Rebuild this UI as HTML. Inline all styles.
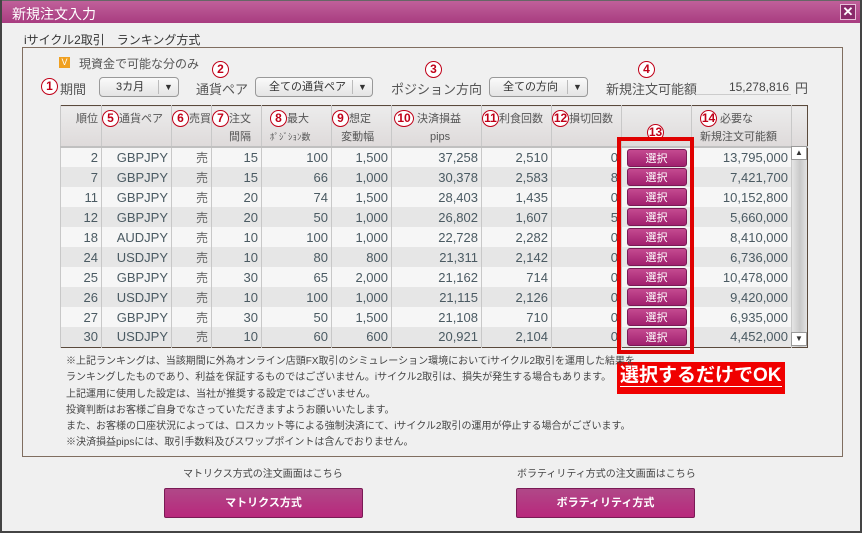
<!DOCTYPE html>
<html><head><meta charset="utf-8"><style>
*{box-sizing:border-box;margin:0;padding:0}
body{width:862px;height:533px;overflow:hidden;background:#f0f0f0;font-family:"Liberation Sans","Noto Sans CJK JP",sans-serif;color:#333;position:relative}
.a{position:absolute;white-space:nowrap}
.win{position:absolute;left:0;top:0;width:862px;height:533px;border:2px solid #444;border-top:none}
.title{position:absolute;left:0;top:0;width:862px;height:23px;background:linear-gradient(#c0609a,#a83c80);border-top:1px solid #666;color:#fff;font-size:14px;padding:3px 12px}
.close{position:absolute;right:6px;top:3px;width:16px;height:16px;border:1px solid #e8c0d8;background:#8a2a6a;color:#fff;font-size:13px;font-weight:bold;text-align:center;line-height:14px}
.panel{position:absolute;left:22px;top:47px;width:821px;height:410px;border:1px solid #806e60}
.c{display:inline-block;width:17px;height:17px;border:1.5px solid #c00018;border-radius:50%;color:#c00018;font-weight:bold;font-size:12px;text-align:center;line-height:14px;background:#fff}
.dd{position:absolute;height:20px;border:1px solid #999;border-radius:4px;background:linear-gradient(#fafafa,#e4e4e4);font-size:11px;color:#333;line-height:18px}
.dd span{position:absolute;right:0;top:2px;width:20px;height:14px;border-left:1px solid #bbb;text-align:center;font-size:9px;line-height:14px}
.lbl{font-size:13px;color:#555}
table{position:absolute;left:60px;top:105px;border-collapse:collapse;border:1px solid #5a4a3c;font-size:13px}
td{border-left:1px solid #c8c8c8;height:20px;text-align:right;padding-right:3px;color:#4a5a62}
td:nth-child(3){font-size:12px;color:#666}
th{height:41px;background:linear-gradient(#ececec,#dedada);border-left:1px solid #c8c8c8;border-bottom:2px solid #c0c0c0;font-weight:normal;font-size:11px;color:#555;vertical-align:top;text-align:left;padding-top:4px;line-height:18px}
tr.o td{background:#f6f6f6}tr.e td{background:#e6e6e6}
.sel{display:inline-block;width:60px;height:18px;border-radius:3px;background:linear-gradient(#c44a90,#a0206e);color:#fff;font-size:11px;text-align:center;line-height:18px;border:1px solid #7a1a55}
.btn{position:absolute;height:30px;border:1px solid #7a1a55;border-radius:2px;background:linear-gradient(#b04888,#b8287c);color:#fff;font-size:11px;font-weight:bold;text-align:center;line-height:29px}
.note{font-size:10px;color:#444;left:66px}
</style></head><body>
<div class="title">新規注文入力<div class="close">✕</div></div>
<div class="win"></div>
<div class="a" style="left:24px;top:31px;font-size:12px;color:#333">iサイクル2取引　ランキング方式</div>
<div class="panel"></div>
<div class="a" style="left:59px;top:57px;width:11px;height:11px;background:#f0a020;color:#fff;font-size:9px;text-align:center;line-height:11px">V</div>
<div class="a lbl" style="left:79px;top:55px;font-size:12px">現資金で可能な分のみ</div>
<div class="a" style="left:41px;top:77px"><span class="c">1</span></div>
<div class="a lbl" style="left:60px;top:79px">期間</div>
<div class="dd" style="left:99px;top:77px;width:80px"><div style="position:absolute;left:16px;top:0">3カ月</div><span>▼</span></div>
<div class="a" style="left:212px;top:60px"><span class="c">2</span></div>
<div class="a lbl" style="left:196px;top:79px">通貨ペア</div>
<div class="dd" style="left:255px;top:77px;width:118px"><div style="position:absolute;left:13px;top:0">全ての通貨ペア</div><span>▼</span></div>
<div class="a" style="left:425px;top:60px"><span class="c">3</span></div>
<div class="a lbl" style="left:391px;top:79px">ポジション方向</div>
<div class="dd" style="left:489px;top:77px;width:99px"><div style="position:absolute;left:13px;top:0">全ての方向</div><span>▼</span></div>
<div class="a" style="left:638px;top:60px"><span class="c">4</span></div>
<div class="a lbl" style="left:606px;top:79px">新規注文可能額</div>
<div class="a" style="left:696px;top:80px;width:95px;border-bottom:1px solid #ccc;font-size:12px;text-align:right;color:#444;padding-right:2px">15,278,816</div>
<div class="a lbl" style="left:795px;top:78px">円</div>
<table>
<tr><th style="width:41px;text-align:right;padding-right:3px">順位</th><th style="width:70px"><span class="c">5</span>通貨ペア</th><th style="width:40px"><span class="c">6</span>売買</th><th style="width:50px;text-align:right;padding-right:10px"><span class="c" style="float:left">7</span>注文<br>間隔</th><th style="width:70px;padding-left:8px"><span class="c">8</span>最大<br><span style="font-size:9px">ﾎﾟｼﾞｼｮﾝ数</span></th><th style="width:60px"><span class="c">9</span>想定<br>&nbsp;&nbsp;&nbsp;変動幅</th><th style="width:90px;padding-left:2px"><span class="c" style="width:20px">10</span> 決済損益<br><span style="padding-left:36px">pips</span></th><th style="width:70px"><span class="c">11</span>利食回数</th><th style="width:70px"><span class="c">12</span>損切回数</th><th style="width:70px"></th><th style="width:100px;padding-left:8px"><span class="c">14</span> 必要な<br>新規注文可能額</th><th style="width:16px"></th></tr>
<tr class="o"><td>2</td><td>GBPJPY</td><td>売</td><td>15</td><td>100</td><td>1,500</td><td>37,258</td><td>2,510</td><td>0</td><td style="text-align:center;padding:0"><span class="sel">選択</span></td><td>13,795,000</td><td rowspan="10" style="background:linear-gradient(90deg,#e4e4e4,#c8c8c8,#e4e4e4);padding:0;vertical-align:top"></td></tr>
<tr class="e"><td>7</td><td>GBPJPY</td><td>売</td><td>15</td><td>66</td><td>1,000</td><td>30,378</td><td>2,583</td><td>8</td><td style="text-align:center;padding:0"><span class="sel">選択</span></td><td>7,421,700</td></tr>
<tr class="o"><td>11</td><td>GBPJPY</td><td>売</td><td>20</td><td>74</td><td>1,500</td><td>28,403</td><td>1,435</td><td>0</td><td style="text-align:center;padding:0"><span class="sel">選択</span></td><td>10,152,800</td></tr>
<tr class="e"><td>12</td><td>GBPJPY</td><td>売</td><td>20</td><td>50</td><td>1,000</td><td>26,802</td><td>1,607</td><td>5</td><td style="text-align:center;padding:0"><span class="sel">選択</span></td><td>5,660,000</td></tr>
<tr class="o"><td>18</td><td>AUDJPY</td><td>売</td><td>10</td><td>100</td><td>1,000</td><td>22,728</td><td>2,282</td><td>0</td><td style="text-align:center;padding:0"><span class="sel">選択</span></td><td>8,410,000</td></tr>
<tr class="e"><td>24</td><td>USDJPY</td><td>売</td><td>10</td><td>80</td><td>800</td><td>21,311</td><td>2,142</td><td>0</td><td style="text-align:center;padding:0"><span class="sel">選択</span></td><td>6,736,000</td></tr>
<tr class="o"><td>25</td><td>GBPJPY</td><td>売</td><td>30</td><td>65</td><td>2,000</td><td>21,162</td><td>714</td><td>0</td><td style="text-align:center;padding:0"><span class="sel">選択</span></td><td>10,478,000</td></tr>
<tr class="e"><td>26</td><td>USDJPY</td><td>売</td><td>10</td><td>100</td><td>1,000</td><td>21,115</td><td>2,126</td><td>0</td><td style="text-align:center;padding:0"><span class="sel">選択</span></td><td>9,420,000</td></tr>
<tr class="o"><td>27</td><td>GBPJPY</td><td>売</td><td>30</td><td>50</td><td>1,500</td><td>21,108</td><td>710</td><td>0</td><td style="text-align:center;padding:0"><span class="sel">選択</span></td><td>6,935,000</td></tr>
<tr class="e"><td>30</td><td>USDJPY</td><td>売</td><td>10</td><td>60</td><td>600</td><td>20,921</td><td>2,104</td><td>0</td><td style="text-align:center;padding:0"><span class="sel">選択</span></td><td>4,452,000</td></tr>
</table>
<div class="a" style="left:791px;top:146px;width:16px;height:14px;background:#fff;border:1px solid #999;font-size:8px;text-align:center;line-height:12px">▲</div>
<div class="a" style="left:791px;top:332px;width:16px;height:14px;background:#fff;border:1px solid #999;font-size:8px;text-align:center;line-height:12px">▼</div>
<div class="a" style="left:647px;top:123px"><span class="c">13</span></div>
<div class="a" style="left:617px;top:137px;width:77px;height:217px;border:4px solid #e00000"></div>
<div class="a" style="left:617px;top:362px;width:168px;height:32px;background:#f00000;color:#fff;font-size:19px;font-weight:bold;padding:1px 3px;line-height:26px"><span style="border-bottom:1.5px solid #fff">選択するだけでOK</span></div>
<div class="a note" style="top:352px">※上記ランキングは、当該期間に外為オンライン店頭FX取引のシミュレーション環境においてiサイクル2取引を運用した結果を</div>
<div class="a note" style="top:368px">ランキングしたものであり、利益を保証するものではございません。iサイクル2取引は、損失が発生する場合もあります。</div>
<div class="a note" style="top:385px">上記運用に使用した設定は、当社が推奨する設定ではございません。</div>
<div class="a note" style="top:401px">投資判断はお客様ご自身でなさっていただきますようお願いいたします。</div>
<div class="a note" style="top:417px">また、お客様の口座状況によっては、ロスカット等による強制決済にて、iサイクル2取引の運用が停止する場合がございます。</div>
<div class="a note" style="top:433px">※決済損益pipsには、取引手数料及びスワップポイントは含んでおりません。</div>
<div class="a" style="left:183px;top:465px;font-size:10px;color:#444">マトリクス方式の注文画面はこちら</div>
<div class="a" style="left:517px;top:465px;font-size:10px;color:#444">ボラティリティ方式の注文画面はこちら</div>
<div class="btn" style="left:164px;top:488px;width:199px">マトリクス方式</div>
<div class="btn" style="left:516px;top:488px;width:179px">ボラティリティ方式</div>
</body></html>
